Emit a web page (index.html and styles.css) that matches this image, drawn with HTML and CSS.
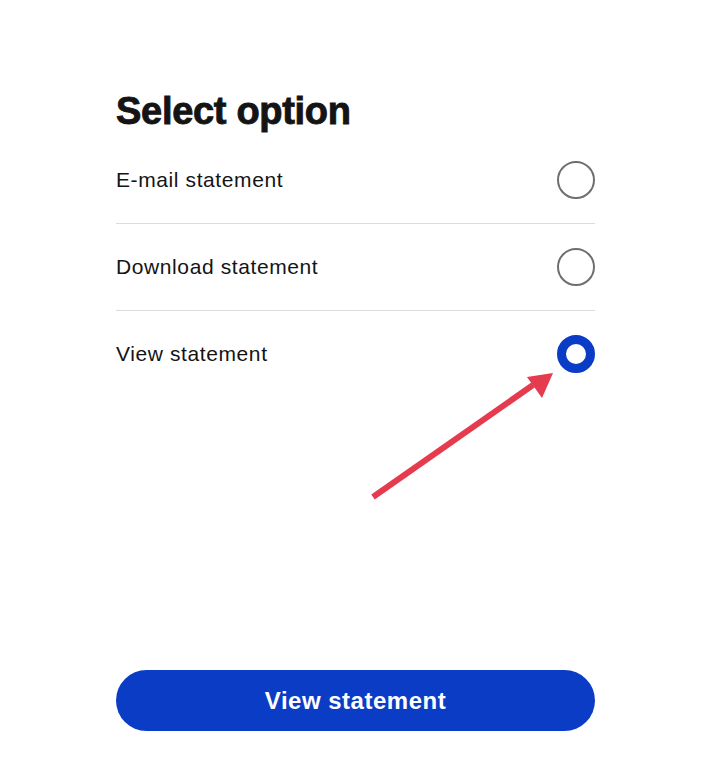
FILE: index.html
```html
<!DOCTYPE html>
<html lang="en">
<head>
    <meta charset="UTF-8">
    <meta name="viewport" content="width=device-width, initial-scale=1.0">
    <title>Select option</title>
    <link rel="stylesheet" href="styles.css">
</head>
<body>
    <div class="screen">
        <h1 class="title">Select option</h1>
        <div class="options">
            <label class="option">
                <span class="option-label">E-mail statement</span>
                <span class="radio"></span>
            </label>
            <label class="option">
                <span class="option-label">Download statement</span>
                <span class="radio"></span>
            </label>
            <label class="option">
                <span class="option-label">View statement</span>
                <span class="radio checked"></span>
            </label>
        </div>
        <div class="spacer"></div>
        <button class="primary">View statement</button>

        <svg class="pointer" width="200" height="140" viewBox="0 0 200 140">
            <line x1="5" y1="129" x2="165" y2="17" stroke="#e63a4e" stroke-width="6"/>
            <polygon points="185,5 159,9 174,30" fill="#e63a4e"/>
        </svg>
    </div>
</body>
</html>
```

FILE: styles.css
```css
body {
    margin: 0;
    background: #fff;
    font-family: "Liberation Sans", Arial, sans-serif;
    color: #141414;
}
.screen {
    position: relative;
    width: 720px;
    height: 758px;
    box-sizing: border-box;
    padding: 86px 125px 27px 116px;
    display: flex;
    flex-direction: column;
}
.title {
    margin: 0;
    font-size: 38px;
    line-height: 50px;
    font-weight: 700;
    letter-spacing: -0.3px;
    -webkit-text-stroke: 0.9px #141414;
    height: 51px;
}
.option {
    display: flex;
    align-items: center;
    justify-content: space-between;
    height: 86px;
    border-bottom: 1px solid #dcdcdc;
}
.option:last-child {
    border-bottom: none;
}
.option-label {
    font-size: 21px;
    letter-spacing: 0.6px;
}
.radio {
    width: 34px;
    height: 34px;
    border: 2px solid #6f6f6f;
    border-radius: 50%;
}
.radio.checked {
    width: 20px;
    height: 20px;
    border: 9px solid #0b3cc6;
}
.spacer {
    flex: 1;
}
.primary {
    height: 61px;
    border: none;
    border-radius: 31px;
    background: #0b3cc6;
    color: #fff;
    font-family: "Liberation Sans", Arial, sans-serif;
    font-size: 24px;
    font-weight: 700;
    letter-spacing: 0.5px;
}
.pointer {
    position: absolute;
    left: 368px;
    top: 368px;
}
```
